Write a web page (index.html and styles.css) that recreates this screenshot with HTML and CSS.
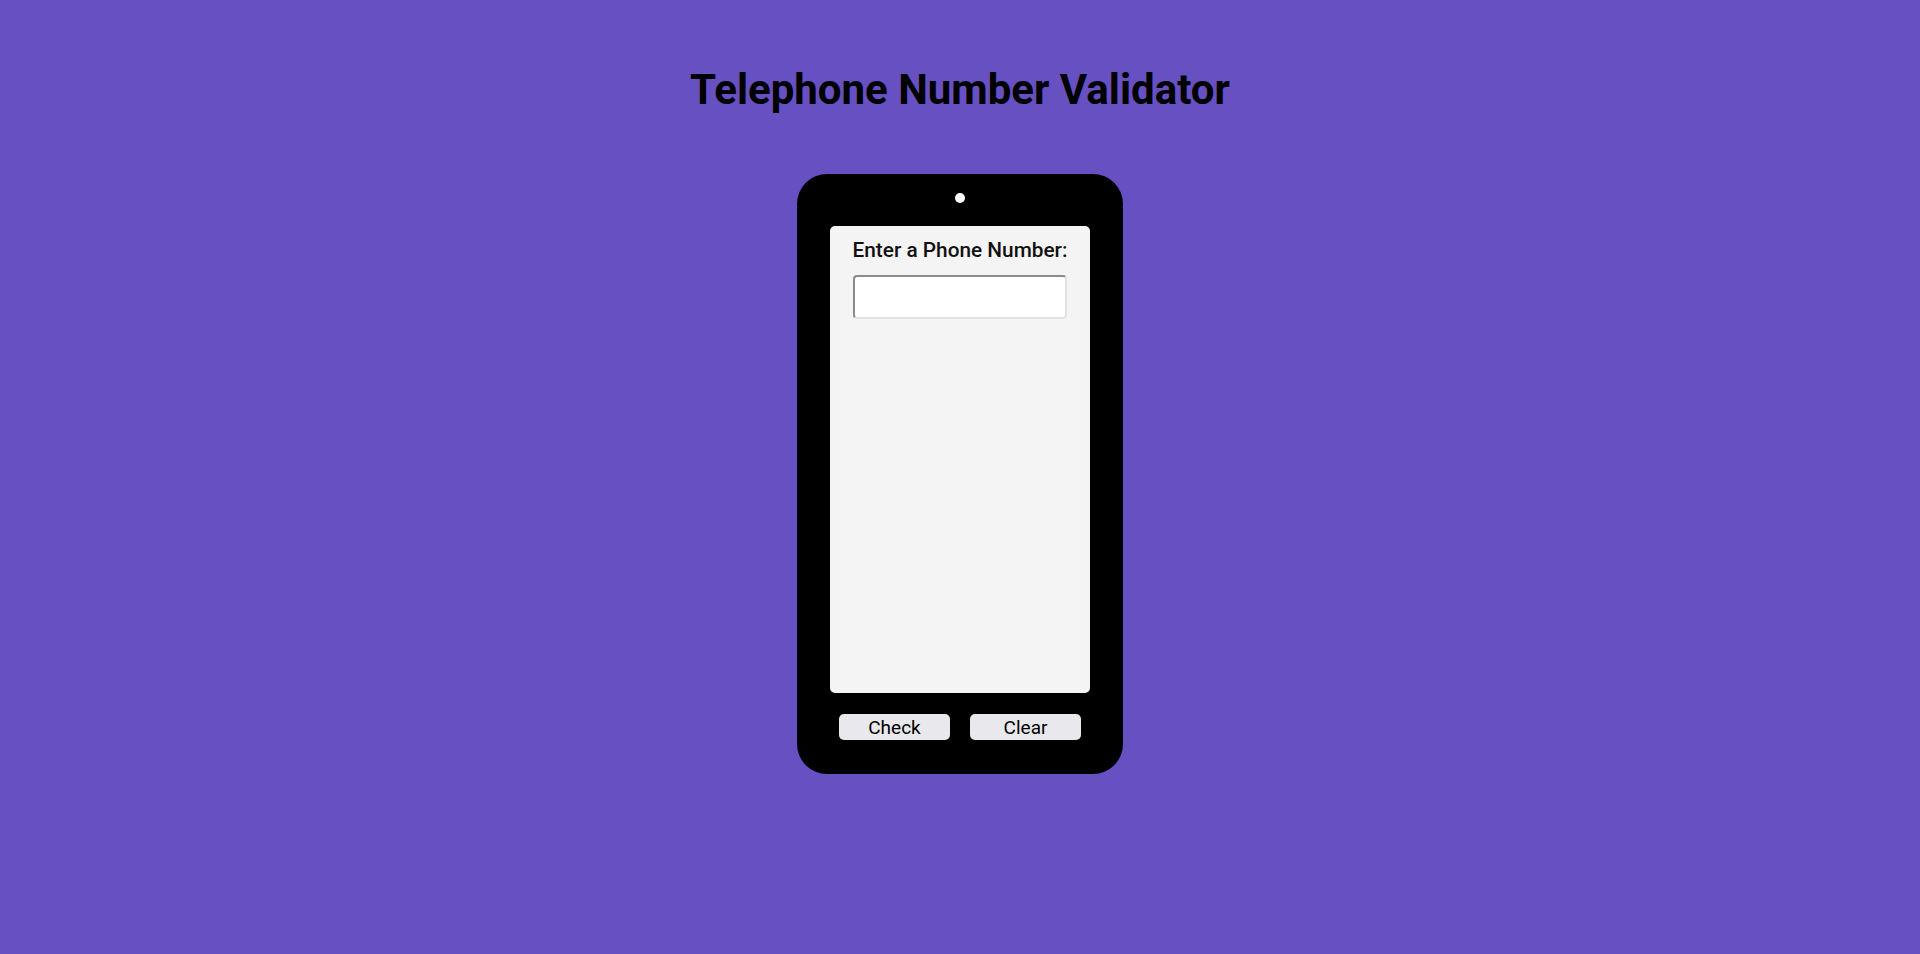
FILE: index.html
```html
<!DOCTYPE html>
<html lang="en">
  <head>
    <meta charset="UTF-8" />
    <meta name="viewport" content="width=device-width, initial-scale=1.0" />
    <title>Telephone Number Validator</title>
    <link rel="stylesheet" href="styles.css">
  </head>
  <body>
    <main class="container">
      <h1>Telephone Number Validator</h1>

      <div class="phone">
        <div class="camera"></div>
        <div class="screen">
          <label for="user-input">Enter a Phone Number:</label>
          <input type="text" id="user-input" />
          <div id="results-div"></div>
        </div>
        <div class="buttons">
          <button id="check-btn">Check</button>
          <button id="clear-btn">Clear</button>
        </div>
      </div>
    </main>
  </body>
</html>
```

FILE: styles.css
```css
* {
  margin: 0;
  padding: 0;
  box-sizing: border-box;
}

body {
  font-family: Roboto, "Liberation Sans", sans-serif;
  background-color: #6650c2;
  color: #000;
  height: 100vh;
}

.container {
  display: flex;
  flex-direction: column;
  align-items: center;
}

h1 {
  font-size: 42px;
  font-weight: 700;
  margin-top: 65px;
  margin-bottom: 60px;
}

.phone {
  width: 326px;
  height: 600px;
  background-color: #000;
  border-radius: 30px;
  display: flex;
  flex-direction: column;
  align-items: center;
}

.camera {
  width: 10px;
  height: 10px;
  border-radius: 50%;
  background-color: #fff;
  margin-top: 19px;
}

.screen {
  width: 260px;
  height: 467px;
  margin-top: 23px;
  background-color: #f4f4f4;
  border-radius: 5px;
  padding-top: 12px;
  display: flex;
  flex-direction: column;
  align-items: center;
}

.screen label {
  font-size: 20.8px;
  font-weight: 500;
  color: #111;
}

.screen input {
  width: 214px;
  height: 44px;
  margin-top: 13px;
  border: 2px solid;
  border-color: #8c8c8c #e2e2e2 #e2e2e2 #8c8c8c;
  border-radius: 4px;
  background-color: #fff;
  font-size: 18px;
  padding: 0 8px;
}

.buttons {
  display: flex;
  gap: 20px;
  margin-top: 21px;
}

.buttons button {
  width: 111px;
  height: 26px;
  border: none;
  border-radius: 5px;
  background-color: #e9e9ed;
  font-family: Roboto, "Liberation Sans", sans-serif;
  font-size: 19px;
  color: #000;
}
```
